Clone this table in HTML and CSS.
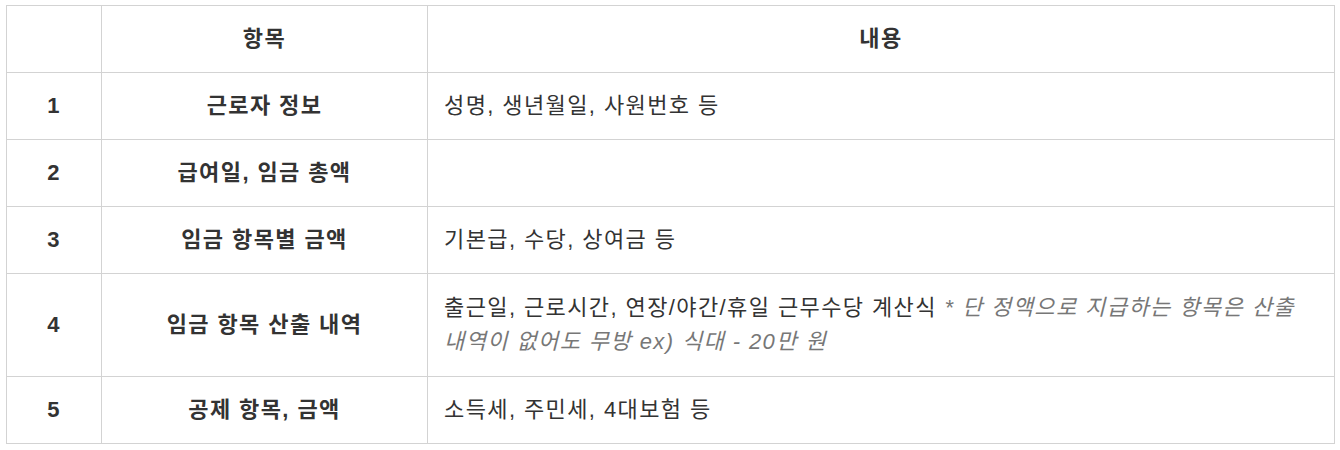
FILE: index.html
```html
<!DOCTYPE html>
<html lang="ko">
<head>
<meta charset="utf-8">
<link rel="stylesheet" href="styles.css">
</head>
<body>
<table class="info-table">
  <colgroup>
    <col class="c-no">
    <col class="c-item">
    <col class="c-desc">
  </colgroup>
  <thead>
    <tr><th></th><th>항목</th><th>내용</th></tr>
  </thead>
  <tbody>
    <tr><td class="num">1</td><td class="item">근로자 정보</td><td>성명, 생년월일, 사원번호 등</td></tr>
    <tr><td class="num">2</td><td class="item">급여일, 임금 총액</td><td></td></tr>
    <tr><td class="num">3</td><td class="item">임금 항목별 금액</td><td>기본급, 수당, 상여금 등</td></tr>
    <tr class="tall"><td class="num">4</td><td class="item">임금 항목 산출 내역</td><td>출근일, 근로시간, 연장/야간/휴일 근무수당 계산식 <em class="note">* 단 정액으로 지급하는 항목은 산출 내역이 없어도 무방 ex) 식대 - 20만 원</em></td></tr>
    <tr><td class="num">5</td><td class="item">공제 항목, 금액</td><td>소득세, 주민세, 4대보험 등</td></tr>
  </tbody>
</table>
</body>
</html>
```

FILE: styles.css
```css
html, body {
  margin: 0;
  padding: 0;
  background: #ffffff;
}
body {
  padding: 5px 6px;
  font-family: "Liberation Sans", Arial, "Noto Sans CJK KR", sans-serif;
  font-size: 22px;
  letter-spacing: 1.4px;
  line-height: 34px;
  color: #333333;
}
.info-table {
  width: 1329px;
  border-collapse: collapse;
  table-layout: fixed;
}
.c-no { width: 95px; }
.c-item { width: 326px; }
.info-table th,
.info-table td {
  border: 1px solid #d3d3d3;
  padding: 16px;
  vertical-align: middle;
}
.info-table th {
  font-weight: bold;
  text-align: center;
}
.info-table td.num,
.info-table td.item {
  font-weight: bold;
  text-align: center;
}
.info-table .tall td {
  padding-top: 17px;
  padding-bottom: 17px;
}
.note {
  color: #777777;
  font-style: italic;
}
```
